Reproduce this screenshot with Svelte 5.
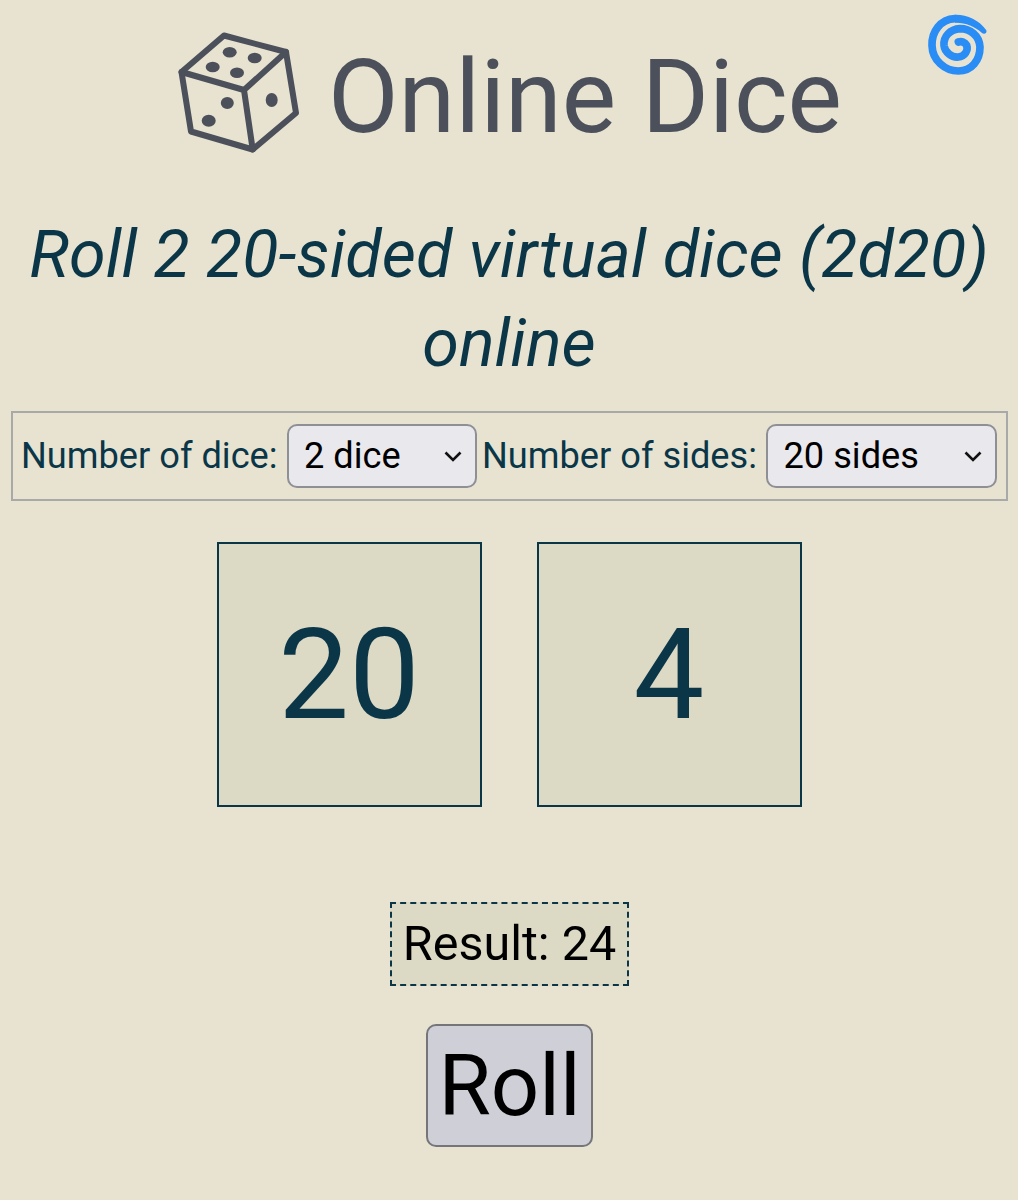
<script>
  let dice = $state('2');
  let sides = $state('20');
</script>

<div class="page">
  <a class="spiral" href="#top" aria-label="Home">
    <svg viewBox="45 35 195 195" width="65" height="65" fill="none" stroke="#2a8cf5" stroke-width="23" stroke-linecap="round">
      <path d="M135 55 C90 57 65 95 66 135 C67 180 105 212 145 212 C185 212 210 180 210 140 C208 105 180 85 150 85 C120 87 100 108 102 135 C104 155 125 172 145 170 C165 168 175 150 170 135 C165 125 155 122 145 125" />
      <path fill="#2a8cf5" stroke="none" d="M135 43 C170 42 207 58 229 90 C232 99 222 104 215 97 C195 78 165 66 135 67 Z" />
    </svg>
  </a>

  <header class="brand">
    <svg class="die" viewBox="176 30 125 125" width="125" height="125" fill="none" stroke="#4b505b" stroke-width="6" stroke-linejoin="round" stroke-linecap="round">
      <path d="M181.500 72 L224 35.500 L286 52 L296 113 L252.700 149.500 L191 131.500 Z" />
      <path d="M181.500 72 L244 90 L286 52 M244 90 L252.700 149.500" />
      <g fill="#4b505b" stroke="none">
        <ellipse cx="229.700" cy="52.300" rx="7" ry="5.300" />
        <ellipse cx="254.700" cy="58" rx="7" ry="5.300" />
        <ellipse cx="212.700" cy="67" rx="7" ry="5.300" />
        <ellipse cx="237" cy="72.700" rx="7" ry="5.300" />
        <ellipse cx="227.300" cy="103" rx="6.500" ry="6" />
        <ellipse cx="208.700" cy="120.700" rx="7" ry="6" />
        <ellipse cx="271.700" cy="100" rx="6" ry="7" />
      </g>
    </svg>
    <h1>Online Dice</h1>
  </header>

  <h2>Roll 2 20-sided virtual dice (2d20) online</h2>

  <form class="controls">
    <label for="dice">Number of dice:</label>
    <span class="pick dice-pick">
      <select id="dice" bind:value={dice}>
        <option value="1">1 die</option>
        <option value="2">2 dice</option>
        <option value="3">3 dice</option>
      </select>
      <svg class="chev" viewBox="0 0 18 11" width="18" height="11" fill="none" stroke="#111" stroke-width="2.600"><path d="M1.500 1.500 L9 9 L16.500 1.500" /></svg>
    </span>
    <label for="sides">Number of sides:</label>
    <span class="pick sides-pick">
      <select id="sides" bind:value={sides}>
        <option value="6">6 sides</option>
        <option value="20">20 sides</option>
      </select>
      <svg class="chev" viewBox="0 0 18 11" width="18" height="11" fill="none" stroke="#111" stroke-width="2.600"><path d="M1.500 1.500 L9 9 L16.500 1.500" /></svg>
    </span>
  </form>

  <div class="dice">
    <div class="die-box">20</div>
    <div class="die-box">4</div>
  </div>

  <div class="result">Result: 24</div>

  <button class="roll" type="button">Roll</button>
</div>

<style>
  :global(body) {
    margin: 0;
    background: #e7e3d0;
  }
  .page {
    position: relative;
    height: 1200px;
    overflow: hidden;
    box-sizing: border-box;
    padding-top: 30px;
    font-family: Roboto, sans-serif;
    display: flex;
    flex-direction: column;
    align-items: center;
    color: #0a3648;
  }
  .spiral {
    position: absolute;
    top: 12px;
    left: 925px;
    width: 65px;
    height: 65px;
  }
  .spiral svg, .die { display: block; }
  .brand {
    display: flex;
    align-items: center;
    gap: 27px;
    height: 125px;
  }
  h1 {
    margin: 8px 0 0;
    font-size: 102.600px;
    font-weight: 400;
    color: #4b505b;
    line-height: 134px;
  }
  h2 {
    margin: 55px 0 0;
    width: 990px;
    text-align: center;
    font-size: 66.500px;
    font-weight: 400;
    font-style: italic;
    line-height: 89px;
    color: #0a3648;
  }
  .controls {
    margin-top: 23px;
    margin-left: 1px;
    width: 997px;
    height: 90px;
    box-sizing: border-box;
    border: 2px solid #a9a9a9;
    padding-left: 8px;
    display: flex;
    align-items: center;
    justify-content: flex-start;
    font-size: 36.200px;
  }
  .controls label {
    white-space: nowrap;
    padding-bottom: 2px;
  }
  .pick {
    position: relative;
    display: block;
    margin: 0 5.500px 0 9px;
  }
  .dice-pick { width: 190px; }
  .sides-pick { width: 231px; margin: 0 0 0 9px; }
  select {
    appearance: none;
    display: block;
    width: 100%;
    height: 64px;
    box-sizing: border-box;
    border: 2px solid #8f8f96;
    border-radius: 10px;
    background: #e9e8ed;
    color: #000;
    font: 36.200px Roboto, sans-serif;
    padding: 0 0 2px 15.500px;
  }
  .chev {
    position: absolute;
    right: 15px;
    top: 27px;
    pointer-events: none;
  }
  .dice {
    margin-top: 41px;
    display: flex;
    gap: 55px;
  }
  .die-box {
    width: 265px;
    height: 265px;
    box-sizing: border-box;
    border: 2px solid #0a3648;
    background: #dcd9c5;
    display: flex;
    align-items: center;
    justify-content: center;
    font-size: 126px;
    color: #0a3648;
  }
  .result {
    margin-top: 95px;
    margin-left: 1px;
    width: 239px;
    height: 84px;
    box-sizing: border-box;
    border: 2px dashed #0a3648;
    background: #dcd9c5;
    color: #000;
    font-size: 48.500px;
    display: flex;
    align-items: center;
    justify-content: center;
    padding-bottom: 2px;
  }
  .roll {
    margin-top: 38px;
    margin-left: 1px;
    width: 167px;
    height: 123px;
    box-sizing: border-box;
    padding: 0;
    border: 2px solid #76757a;
    border-radius: 10px;
    background: #cfd0d7;
    color: #000;
    font: 85px Roboto, sans-serif;
  }
</style>
